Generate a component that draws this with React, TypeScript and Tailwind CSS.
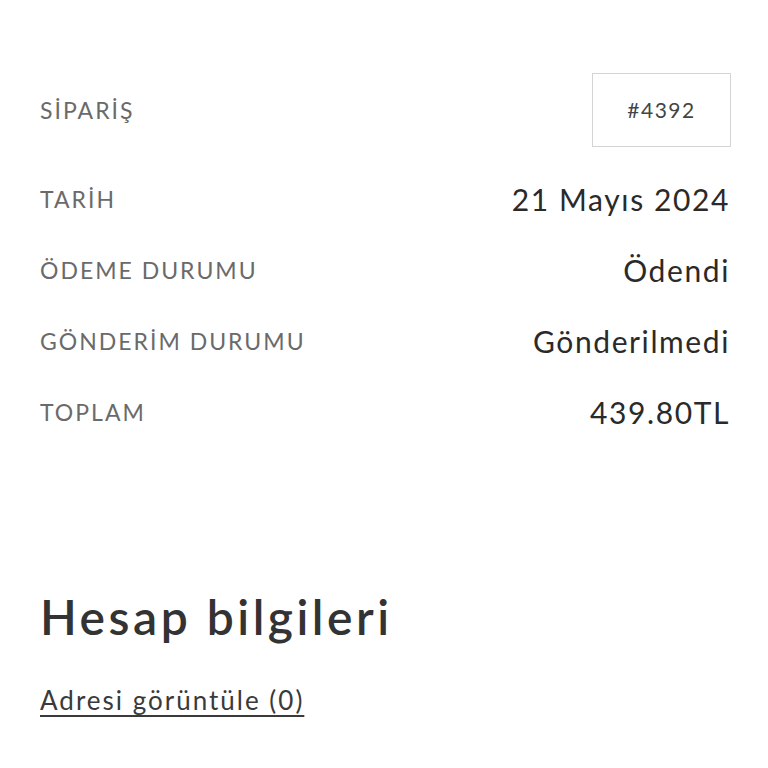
const rows = [
  { label: "TARİH", value: "21 Mayıs 2024" },
  { label: "ÖDEME DURUMU", value: "Ödendi" },
  { label: "GÖNDERİM DURUMU", value: "Gönderilmedi" },
  { label: "TOPLAM", value: "439.80TL" },
];

export default function App() {
  return (
    <div className="min-h-[768px] bg-white px-10 pt-[73px] font-['Lato',sans-serif]">
      {/* sipariş numarası */}
      <div className="flex items-center justify-between">
        <span className="text-[23px] tracking-[2px] text-[#6a6a6a]">SİPARİŞ</span>
        <div className="-mr-[3px] flex h-[74px] w-[139px] items-center justify-center border border-[#d4d4d4] text-[21px] tracking-[1.5px] text-[#444]">
          #4392
        </div>
      </div>

      <div className="mt-[17px]">
        {rows.map((row) => (
          <div key={row.label} className="flex h-[71px] items-center justify-between">
            <span className="text-[23px] tracking-[2px] text-[#6a6a6a]">{row.label}</span>
            <span className="-mr-[2px] text-[30px] tracking-[1.6px] text-[#2a2a2a]">{row.value}</span>
          </div>
        ))}
      </div>

      <h2 className="mt-[145px] text-[48px] font-semibold leading-none tracking-[3.5px] text-[#333]">Hesap bilgileri</h2>
      <a href="#" className="mt-[40px] inline-block text-[26px] tracking-[2px] text-[#3a3a3a] underline underline-offset-[5px] decoration-[1.5px]">
        Adresi görüntüle (0)
      </a>
    </div>
  );
}
